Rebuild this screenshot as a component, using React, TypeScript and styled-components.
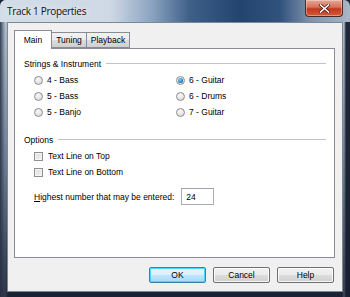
import React from "react";
import styled, { createGlobalStyle } from "styled-components";

const Global = createGlobalStyle`
  html, body { margin: 0; padding: 0; background: #1d2535; }
  body { font-family: "Liberation Sans", Arial, sans-serif; }
  * { box-sizing: border-box; }
`;

const Window = styled.div`
  width: 350px;
  height: 297px;
  display: flex;
  flex-direction: column;
  padding: 0 7px 7px 7px;
  background:
    linear-gradient(to right, rgba(40,50,70,0.9) 0px, rgba(140,155,175,0.2) 5px, rgba(0,0,0,0) 8px, rgba(0,0,0,0) 342px, rgba(150,165,185,0.3) 344px, rgba(25,32,48,0.95) 346px),
    linear-gradient(to bottom, #c9d5e2 0px, #aebdcd 30px, #6d7f96 150px, #2a3448 260px, #1a2132 297px);
  border-radius: 6px 6px 0 0;
  overflow: hidden;
`;

const TitleBar = styled.div`
  height: 22px;
  flex: none;
  display: flex;
  align-items: center;
  justify-content: space-between;
  margin: 0 -7px;
  padding: 0 7px 2px 7px;
  background: linear-gradient(
    to right,
    #d3dde8 0px,
    #cfd9e5 110px,
    #8ea6c2 150px,
    #3e5f88 190px,
    #23446f 240px,
    #31527d 280px,
    #7f93ab 310px,
    #a9b6c6 350px
  );
`;

const Title = styled.span`
  font-family: "Open Sans", "Noto Sans", sans-serif;
  font-size: 10px;
  color: #111;
  letter-spacing: -0.3px;
  text-shadow: 0 0 6px rgba(255,255,255,0.9);
  margin-top: 1px;
`;

const CloseButton = styled.div`
  align-self: flex-start;
  width: 38px;
  height: 17px;
  border: 1px solid #4a2a26;
  border-top: none;
  border-radius: 0 0 4px 4px;
  background: linear-gradient(to bottom, #e7a796 0%, #d7705a 45%, #c2391b 55%, #d45a3a 100%);
  display: flex;
  align-items: center;
  justify-content: center;
  box-shadow: inset 0 0 0 1px rgba(255,255,255,0.35);
`;

const Client = styled.div`
  flex: 1;
  background: #f0f0f0;
  display: flex;
  flex-direction: column;
  padding: 6px 7px 8px 6px;
  border: 1px solid #7c8796;
`;

const TabStrip = styled.div`
  display: flex;
  align-items: flex-end;
  height: 19px;
  position: relative;
  z-index: 1;
`;

const Tab = styled.div<{ $active?: boolean; $w: number }>`
  width: ${(p) => p.$w}px;
  height: ${(p) => (p.$active ? 19 : 16)}px;
  margin-left: ${(p) => (p.$active ? 0 : -1)}px;
  border: 1px solid #898c95;
  border-bottom: ${(p) => (p.$active ? "none" : "1px solid #898c95")};
  background: ${(p) =>
    p.$active ? "#ffffff" : "linear-gradient(to bottom, #f2f2f2 0%, #ebebeb 50%, #dddddd 51%, #cfcfcf 100%)"};
  font-size: 8.5px;
  color: #000;
  display: flex;
  justify-content: center;
  align-items: ${(p) => (p.$active ? "flex-start" : "center")};
  padding-top: ${(p) => (p.$active ? 4 : 0)}px;
  margin-bottom: ${(p) => (p.$active ? -1 : 0)}px;
  position: relative;
  z-index: ${(p) => (p.$active ? 2 : 1)};
`;

const Panel = styled.div`
  height: 210px;
  background: #ffffff;
  border: 1px solid #898c95;
  padding: 9px 8px 0 9px;
  display: flex;
  flex-direction: column;
`;

const GroupHeader = styled.div`
  display: flex;
  align-items: center;
  gap: 5px;
  font-size: 8.5px;
  height: 11px;
  color: #000;
`;

const GroupLine = styled.div`
  flex: 1;
  height: 1px;
  background: #c4c4c4;
`;

const RadioGrid = styled.div`
  display: grid;
  grid-template-columns: 142px 1fr;
  grid-auto-rows: 16px;
  padding: 3px 0 0 10px;
`;

const OptionRow = styled.label`
  display: flex;
  align-items: center;
  gap: 4px;
  font-size: 8.5px;
  color: #000;
  height: 16px;
`;

const RadioCircle = styled.span<{ $checked?: boolean }>`
  width: 9px;
  height: 9px;
  border-radius: 50%;
  border: 1px solid #8e8f8f;
  background: radial-gradient(circle at 40% 35%, #fafafa 0%, #e2e2e2 60%, #cfcfcf 100%);
  display: flex;
  align-items: center;
  justify-content: center;
  flex: none;
  &::after {
    content: "";
    display: ${(p) => (p.$checked ? "block" : "none")};
    width: 5px;
    height: 5px;
    border-radius: 50%;
    background: radial-gradient(circle at 40% 35%, #8fd6ff 0%, #1b86d2 55%, #0c4f8f 100%);
  }
`;

const CheckBox = styled.span`
  width: 9px;
  height: 9px;
  border: 1px solid #8e8f8f;
  background: linear-gradient(135deg, #dcdcdc 0%, #f4f4f4 100%);
  box-shadow: inset 0 0 0 1px #f4f4f4;
  flex: none;
  margin-right: 1px;
`;

const OptionsSection = styled.div`
  margin-top: 14px;
  display: flex;
  flex-direction: column;
`;

const CheckList = styled.div`
  display: flex;
  flex-direction: column;
  padding: 3px 0 0 10px;
`;

const NumberRow = styled.div`
  display: flex;
  align-items: center;
  gap: 7px;
  padding: 8px 0 0 10px;
  font-size: 8.5px;
  color: #000;
`;

const Underline = styled.span`
  text-decoration: underline;
`;

const NumberInput = styled.div`
  width: 33px;
  height: 17px;
  border: 1px solid #abadb3;
  border-top-color: #9ea2aa;
  background: #fff;
  font-size: 8.5px;
  padding: 3px 0 0 4px;
  color: #000;
`;

const ButtonRow = styled.div`
  display: flex;
  justify-content: flex-end;
  gap: 7px;
  padding-top: 9px;
  padding-right: 1px;
`;

const Button = styled.div<{ $default?: boolean }>`
  width: 57px;
  height: 16px;
  border-radius: 2px;
  border: 1px solid ${(p) => (p.$default ? "#3c7fb1" : "#707070")};
  background: ${(p) =>
    p.$default
      ? "linear-gradient(to bottom, #eaf6fd 0%, #d9f0fc 50%, #bee6fd 51%, #a7d9f5 100%)"
      : "linear-gradient(to bottom, #f2f2f2 0%, #ebebeb 50%, #dddddd 51%, #cfcfcf 100%)"};
  box-shadow: inset 0 0 0 1px ${(p) => (p.$default ? "#48d6ff" : "rgba(255,255,255,0.8)")};
  font-size: 8.5px;
  color: #000;
  display: flex;
  align-items: center;
  justify-content: center;
`;

const radiosLeft = ["4 - Bass", "5 - Bass", "5 - Banjo"];
const radiosRight = ["6 - Guitar", "6 - Drums", "7 - Guitar"];

export default function App() {
  const rows: React.ReactNode[] = [];
  for (let i = 0; i < 3; i++) {
    rows.push(
      <OptionRow key={"l" + i}>
        <RadioCircle />
        {radiosLeft[i]}
      </OptionRow>
    );
    rows.push(
      <OptionRow key={"r" + i}>
        <RadioCircle $checked={i === 0} />
        {radiosRight[i]}
      </OptionRow>
    );
  }
  return (
    <>
      <Global />
      <Window>
        <TitleBar>
          <Title>Track 1 Properties</Title>
          <CloseButton>
            <svg width="11" height="9" viewBox="0 0 11 9">
              <path d="M1.5 1 L9.5 8 M9.5 1 L1.5 8" stroke="#4a1a10" strokeWidth="3" strokeLinecap="square" />
              <path d="M1.5 1 L9.5 8 M9.5 1 L1.5 8" stroke="#ffffff" strokeWidth="1.6" strokeLinecap="square" />
            </svg>
          </CloseButton>
        </TitleBar>
        <Client>
          <TabStrip>
            <Tab $active $w={38}>Main</Tab>
            <Tab $w={36}>Tuning</Tab>
            <Tab $w={44}>Playback</Tab>
          </TabStrip>
          <Panel>
            <GroupHeader>
              Strings &amp; Instrument
              <GroupLine />
            </GroupHeader>
            <RadioGrid>{rows}</RadioGrid>
            <OptionsSection>
              <GroupHeader>
                Options
                <GroupLine />
              </GroupHeader>
              <CheckList>
                <OptionRow>
                  <CheckBox />
                  Text Line on Top
                </OptionRow>
                <OptionRow>
                  <CheckBox />
                  Text Line on Bottom
                </OptionRow>
              </CheckList>
              <NumberRow>
                <span>
                  <Underline>H</Underline>ighest number that may be entered:
                </span>
                <NumberInput>24</NumberInput>
              </NumberRow>
            </OptionsSection>
          </Panel>
          <ButtonRow>
            <Button $default>OK</Button>
            <Button>Cancel</Button>
            <Button>Help</Button>
          </ButtonRow>
        </Client>
      </Window>
    </>
  );
}
